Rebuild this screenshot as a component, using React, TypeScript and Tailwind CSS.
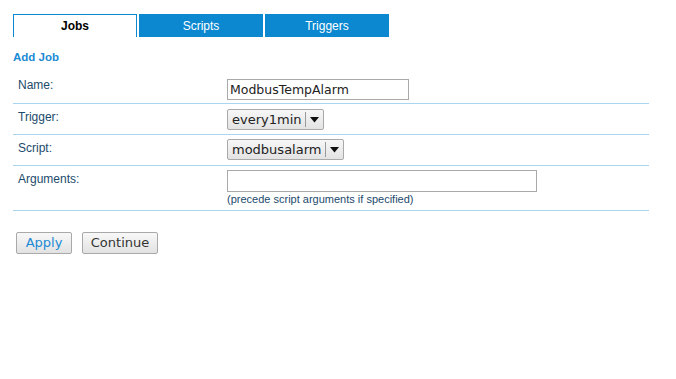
import React from 'react';

const tabs = ['Jobs', 'Scripts', 'Triggers'];

const Select: React.FC<{ value: string; width: string }> = ({ value, width }) => (
  <div
    className={`flex items-center h-[21px] ${width} border border-[#a9a9a9] rounded-[2px] bg-gradient-to-b from-[#f7f7f7] to-[#e3e3e3] font-['DejaVu_Sans',sans-serif] text-[13px] text-[#222]`}
  >
    <span className="flex-1 pl-[4px] leading-[19px]">{value}</span>
    <span className="w-px h-[15px] bg-[#9a9a9a]" />
    <span className="w-[17px] flex items-center justify-center">
      <svg width="9" height="6" viewBox="0 0 9 6">
        <path d="M0 0 L9 0 L4.5 5.5 Z" fill="#111" />
      </svg>
    </span>
  </div>
);

export default function App() {
  const label = "pl-[5px] pt-[6px] w-[214px] shrink-0 text-[12px] leading-[14px] text-[#1c4a6c]";
  return (
    <div className="min-h-screen bg-white px-[13px] pt-[14px] font-['Liberation_Sans',Arial,sans-serif]">
      {/* Tabs */}
      <div className="flex gap-[2px]">
        {tabs.map((t, i) =>
          i === 0 ? (
            <div
              key={t}
              className="w-[124px] h-[23px] border border-b-0 border-[#0b88d0] bg-white flex items-center justify-center text-[12px] font-bold text-black"
            >
              {t}
            </div>
          ) : (
            <div
              key={t}
              className="w-[124px] h-[23px] bg-[#0b88d0] flex items-center justify-center text-[12px] text-white"
            >
              {t}
            </div>
          )
        )}
      </div>

      <div className="mt-[13px] text-[11.5px] font-bold text-[#1a8ad4] leading-[14px]">Add Job</div>

      {/* Form table */}
      <div className="mt-[8px] w-[636px]">
        <div className="flex h-[32px] border-b border-[#a9d5ef]">
          <div className={label}>Name:</div>
          <div className="pt-[5px]">
            <input
              readOnly
              value="ModbusTempAlarm"
              className="w-[182px] h-[21px] border border-[#a9a9a9] px-[2px] font-['DejaVu_Sans',sans-serif] text-[12.5px] text-[#222] outline-none"
            />
          </div>
        </div>
        <div className="flex h-[31px] border-b border-[#a9d5ef]">
          <div className={label}>Trigger:</div>
          <div className="pt-[5px]">
            <Select value="every1min" width="w-[97px]" />
          </div>
        </div>
        <div className="flex h-[31px] border-b border-[#a9d5ef]">
          <div className={label}>Script:</div>
          <div className="pt-[4px]">
            <Select value="modbusalarm" width="w-[117px]" />
          </div>
        </div>
        <div className="flex h-[45px] border-b border-[#a9d5ef]">
          <div className={label}>Arguments:</div>
          <div className="pt-[4px] flex flex-col">
            <input
              readOnly
              value=""
              className="w-[310px] h-[22px] border border-[#a9a9a9] px-[2px] outline-none"
            />
            <span className="mt-[1px] text-[11px] leading-[12px] text-[#1c4a6c]">
              (precede script arguments if specified)
            </span>
          </div>
        </div>
      </div>

      {/* Buttons */}
      <div className="mt-[21px] ml-[3px] flex gap-[10px] font-['DejaVu_Sans',sans-serif] text-[13px]">
        <button className="w-[56px] h-[22px] border border-[#a9a9a9] rounded-[2px] bg-gradient-to-b from-[#f8f8f8] to-[#e2e2e2] text-[#1a8ad4] leading-[20px]">
          Apply
        </button>
        <button className="w-[76px] h-[22px] border border-[#a9a9a9] rounded-[2px] bg-gradient-to-b from-[#f8f8f8] to-[#e2e2e2] text-[#333] leading-[20px]">
          Continue
        </button>
      </div>
    </div>
  );
}
